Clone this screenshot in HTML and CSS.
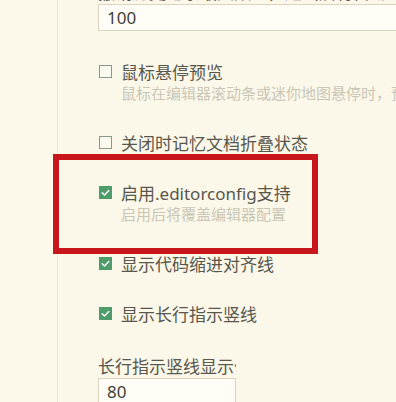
FILE: index.html
```html
<!DOCTYPE html>
<html lang="zh-CN">
<head>
<meta charset="utf-8">
<link rel="stylesheet" href="styles.css">
</head>
<body>
<div class="page">
  <aside class="sidebar"></aside>
  <main class="content">
    <div class="field field-wide">
      <div class="field-label">撤销历史记录最大数量，超出后将自动丢弃最早的记录</div>
      <div class="input">100</div>
    </div>

    <div class="setting has-desc first">
      <div class="title"><span class="box"></span><span>鼠标悬停预览</span></div>
      <div class="desc">鼠标在编辑器滚动条或迷你地图悬停时，预览对应位置的内容</div>
    </div>

    <div class="setting">
      <div class="title"><span class="box"></span><span>关闭时记忆文档折叠状态</span></div>
    </div>

    <div class="setting has-desc">
      <div class="title"><span class="box checked"><svg viewBox="0 0 13 13" width="13" height="13"><path d="M3.2 6.8 L5.5 9 L9.8 4.4" fill="none" stroke="#fff" stroke-width="1.4" stroke-linecap="round" stroke-linejoin="round"/></svg></span><span>启用.editorconfig支持</span></div>
      <div class="desc">启用后将覆盖编辑器配置</div>
    </div>

    <div class="setting">
      <div class="title"><span class="box checked"><svg viewBox="0 0 13 13" width="13" height="13"><path d="M3.2 6.8 L5.5 9 L9.8 4.4" fill="none" stroke="#fff" stroke-width="1.4" stroke-linecap="round" stroke-linejoin="round"/></svg></span><span>显示代码缩进对齐线</span></div>
    </div>

    <div class="setting">
      <div class="title"><span class="box checked"><svg viewBox="0 0 13 13" width="13" height="13"><path d="M3.2 6.8 L5.5 9 L9.8 4.4" fill="none" stroke="#fff" stroke-width="1.4" stroke-linecap="round" stroke-linejoin="round"/></svg></span><span>显示长行指示竖线</span></div>
    </div>

    <div class="field field-narrow">
      <div class="field-label">长行指示竖线显示位置</div>
      <div class="input">80</div>
    </div>
  </main>
  <div class="highlight"></div>
</div>
</body>
</html>
```

FILE: styles.css
```css
html, body {
  margin: 0;
  padding: 0;
  background: #fcf8e9;
  overflow: hidden;
}

.page {
  position: relative;
  display: flex;
  width: 396px;
  height: 402px;
  overflow: hidden;
  font-family: "Noto Sans", "Noto Sans CJK SC", sans-serif;
  color: #57574d;
}

.sidebar {
  flex: 0 0 57px;
  border-right: 1px solid #ebe5d3;
  background: #fcf8ea;
}

.content {
  flex: 1;
  min-width: 0;
  padding-left: 40px;
  margin-top: -18px;
}

.field-label {
  font-size: 17px;
  line-height: 22px;
  white-space: nowrap;
  overflow: hidden;
}

.input {
  box-sizing: border-box;
  height: 27px;
  border: 1px solid #d9d5c0;
  background: #fffdf5;
  padding-left: 8px;
  font-size: 17px;
  line-height: 25px;
  color: #3e3e38;
  white-space: nowrap;
}

.field-wide {
  width: 320px;
}

.field-narrow {
  width: 138px;
  margin-top: 30px;
}

.setting {
  margin-top: 26.5px;
}

.setting.first {
  margin-top: 28.5px;
}

.setting.has-desc + .setting {
  margin-top: 28.5px;
}

.title {
  display: flex;
  align-items: center;
  height: 24px;
  font-size: 17px;
  white-space: nowrap;
}

.box {
  box-sizing: border-box;
  flex: 0 0 13px;
  width: 13px;
  height: 13px;
  margin-left: 1px;
  margin-right: 9px;
  border: 1px solid #889a88;
  background: #fbf9ef;
  display: flex;
}

.box.checked {
  border: none;
  background: #4e9b6b;
}

.desc {
  padding-left: 23px;
  font-size: 15px;
  line-height: 18px;
  color: #c9c6b6;
  white-space: nowrap;
}

.highlight {
  position: absolute;
  left: 53px;
  top: 154px;
  width: 265px;
  height: 100px;
  box-sizing: border-box;
  border: 6px solid #c8171c;
}
```
